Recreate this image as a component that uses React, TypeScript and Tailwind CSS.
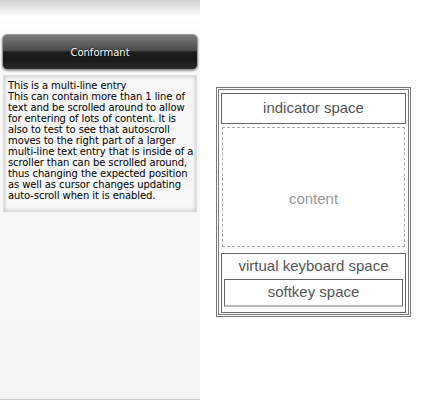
const entryLines = [
  'This is a multi-line entry',
  'This can contain more than 1 line of',
  'text and be scrolled around to allow',
  'for entering of lots of content. It is',
  'also to test to see that autoscroll',
  'moves to the right part of a larger',
  'multi-line text entry that is inside of a',
  'scroller than can be scrolled around,',
  'thus changing the expected position',
  'as well as cursor changes updating',
  'auto-scroll when it is enabled.',
]

export default function App() {
  return (
    <div className="flex h-[400px] w-[423px] bg-white">
      <div className="flex h-[400px] w-[200px] flex-col border-b border-[#c8c8c8] bg-[linear-gradient(to_bottom,#cfcfcf_0px,#ffffff_16px,#f9f9f9_40px,#f5f5f5_100%)] px-[2px] pt-[34px]">
        <div className="flex h-[36px] items-center justify-center rounded-[5px] border border-[#9a9a9a] bg-[linear-gradient(to_bottom,#7a7a7a_0%,#4c4c4c_45%,#1c1c1c_50%,#1a1a1a_75%,#2a2a2a_100%)] shadow-[0_1px_2px_rgba(0,0,0,0.4)]">
          <span className="text-[10px] text-white [font-family:'DejaVu_Sans',sans-serif] [text-shadow:0_0_2px_rgba(0,0,0,0.9)]">
            Conformant
          </span>
        </div>
        <div className="mt-[5px] ml-[1px] h-[137px] w-[194px] overflow-hidden border border-[#dcdcdc] bg-[#f7f7f7] pl-[4px] pt-[4px] shadow-[inset_0_0_4px_rgba(0,0,0,0.25)]">
          {entryLines.map((line) => (
            <div
              key={line}
              className="whitespace-nowrap text-[10px] leading-[11px] tracking-[-0.1px] text-black [font-family:'DejaVu_Sans',sans-serif]"
            >
              {line}
            </div>
          ))}
        </div>
      </div>

      <div className="flex-1 pl-[16px] pt-[87px]">
        <div className="h-[230px] w-[195px] border border-[#777] p-[1px]">
          <div className="flex h-full flex-col border border-[#777] px-[2px] pt-[3px] text-[#555] [font-family:'Liberation_Sans',Arial,sans-serif]">
            <div className="flex h-[31px] items-center justify-center border border-[#666] text-[15px]">
              indicator space
            </div>
            <div className="mx-[1px] mt-[3px] flex h-[120px] items-end justify-center border border-dashed border-[#aaa] pb-[36px] text-[15px] text-[#999]">
              content
            </div>
            <div className="mt-[6px] flex h-[60px] flex-col border border-[#666] px-[2px]">
              <div className="flex h-[25px] items-center justify-center text-[15px]">
                virtual keyboard space
              </div>
              <div className="flex h-[28px] items-center justify-center border border-[#666] border-b-[2px] border-b-[#bbb] text-[15px]">
                softkey space
              </div>
            </div>
          </div>
        </div>
      </div>
    </div>
  )
}
